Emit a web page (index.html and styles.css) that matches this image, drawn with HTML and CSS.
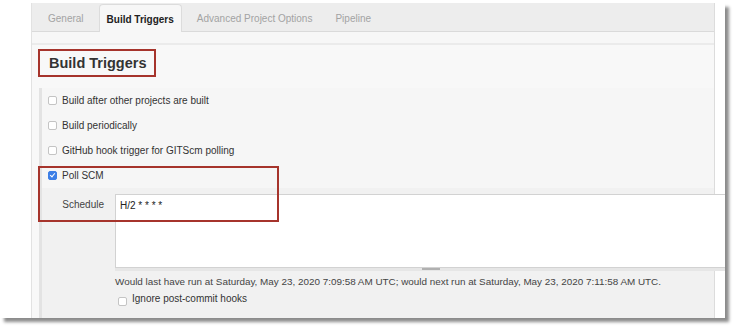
FILE: index.html
```html
<!DOCTYPE html>
<html lang="en">
  <head>
    <meta charset="UTF-8" />
    <meta name="viewport" content="width=device-width, initial-scale=1.0" />
    <link rel="stylesheet" href="styles.css">
    <title>Build Triggers</title>
  </head>
  <body>
    <div class="window">
      <div class="sidebar"></div>

      <div class="main">
        <!-- Tabs -->
        <div class="tabs">
          <a class="tab">General</a>
          <a class="tab active">Build Triggers</a>
          <a class="tab">Advanced Project Options</a>
          <a class="tab">Pipeline</a>
        </div>
        <div class="tab-gap"></div>

        <div class="content">
          <h2 class="section-title"><span class="mark">Build Triggers</span></h2>

          <div class="section">
            <label class="row"><span class="cb"></span>Build after other projects are built</label>
            <label class="row"><span class="cb"></span>Build periodically</label>
            <label class="row"><span class="cb"></span>GitHub hook trigger for GITScm polling</label>
            <label class="row"><span class="cb checked"></span>Poll SCM</label>

            <div class="poll-body">
              <div class="schedule">
                <span class="field-name">Schedule</span>
                <div class="textarea-wrap">
                  <div class="textarea">H/2 * * * *</div>
                  <div class="grip"><span></span></div>
                </div>
              </div>
              <div class="hint">Would last have run at Saturday, May 23, 2020 7:09:58 AM UTC; would next run at Saturday, May 23, 2020 7:11:58 AM UTC.</div>
              <label class="row sub"><span class="cb"></span>Ignore post-commit hooks</label>
            </div>

            <!-- highlight box over the Poll SCM entry -->
            <div class="mark-box"></div>
          </div>
        </div>
      </div>

      <div class="gutter"></div>
    </div>
  </body>
</html>
```

FILE: styles.css
```css
/* Basic Style */
html,
body {
  margin: 0;
  background: #fff;
}
body {
  width: 735px;
  height: 328px;
  overflow: hidden;
  font-family: "Liberation Sans", Arial, sans-serif;
  font-size: 10px;
  color: #333;
}
.window {
  display: flex;
  width: 725px;
  height: 315px;
  margin-top: 3px;
  background: #fff;
  overflow: hidden;
  box-shadow: 4px 4px 3px rgba(0, 0, 0, 0.45);
}
.sidebar {
  width: 31px;
  flex-shrink: 0;
  border-right: 1px solid #e2e2e2;
}
.main {
  width: 682px;
  flex-shrink: 0;
  border-right: 1px solid #dcdcdc;
  background: #f8f8f8;
  display: flex;
  flex-direction: column;
}
.gutter {
  flex: 1;
}

/* Tabs */
.tabs {
  display: flex;
  flex-shrink: 0;
  align-items: flex-end;
  height: 28px;
  padding-left: 8px;
  background: #ededed;
  border-bottom: 1px solid #dadada;
}
.tab {
  height: 27px;
  line-height: 29px;
  padding: 0 8px;
  margin-right: 7px;
  color: #a3a3a3;
  font-size: 10px;
  box-sizing: border-box;
}
.tab.active {
  height: 28px;
  margin-bottom: -1px;
  padding: 0 7px;
  color: #222;
  font-weight: 700;
  background: #f7f7f7;
  border: 1px solid #dcdcdc;
  border-bottom: 0;
  border-radius: 4px 4px 0 0;
}
.tab-gap {
  flex-shrink: 0;
  height: 11px;
  background: #f7f7f7;
  border-bottom: 2px solid #ebebeb;
}

/* Heading */
.content {
  flex: 1;
  min-height: 0;
  display: flex;
  flex-direction: column;
  padding: 4px 0 0 6px;
}
.section-title {
  margin: 0;
  font-size: 14.5px;
  font-weight: 700;
  color: #333;
}
.mark {
  display: inline-block;
  height: 24px;
  line-height: 25px;
  padding: 0 7px 0 9px;
  border: 2px solid #a6342c;
}

/* Trigger list */
.section {
  position: relative;
  flex: 1;
  margin: 11px 0 0 1px;
  border-left: 3px solid #e3e3e3;
  background: #f6f6f6;
}
.row {
  display: flex;
  align-items: center;
  height: 25px;
  padding-left: 6px;
  gap: 5px;
}
.cb {
  flex-shrink: 0;
  width: 9px;
  height: 9px;
  border: 1px solid #c4c4c4;
  border-radius: 2px;
  background: #fff;
  box-sizing: border-box;
}
.cb.checked {
  position: relative;
  background: #3d7fe6;
  border-color: #3d7fe6;
}
.cb.checked::after {
  content: "";
  position: absolute;
  left: 2px;
  top: 0px;
  width: 2px;
  height: 4px;
  border: solid #fff;
  border-width: 0 1px 1px 0;
  transform: rotate(40deg);
}

/* Poll SCM */
.poll-body {
  background: #f1f1f1;
  padding-top: 6px;
  padding-bottom: 20px;
}
.schedule {
  display: flex;
  align-items: flex-start;
}
.field-name {
  flex-shrink: 0;
  width: 62px;
  text-align: right;
  padding-top: 5px;
  margin-right: 11px;
  color: #444;
}
.textarea-wrap {
  width: 632px;
  flex-shrink: 0;
}
.textarea {
  height: 62px;
  padding: 5px 4px;
  background: #fff;
  border: 1px solid #d2d2d2;
  color: #222;
}
.grip {
  height: 3px;
  background: #e6e6e6;
  display: flex;
  justify-content: center;
}
.grip span {
  width: 18px;
  height: 2px;
  background: #b0b0b0;
}
.hint {
  margin: 5px 0 0 73px;
  color: #444;
  font-size: 9.9px;
  white-space: nowrap;
}
.row.sub {
  height: 22px;
  padding-left: 76px;
}
.row.sub .cb {
  margin-top: 7px;
}

/* Annotation box */
.mark-box {
  position: absolute;
  left: -4px;
  top: 78px;
  width: 237px;
  height: 52px;
  border: 2px solid #a6342c;
}
```
